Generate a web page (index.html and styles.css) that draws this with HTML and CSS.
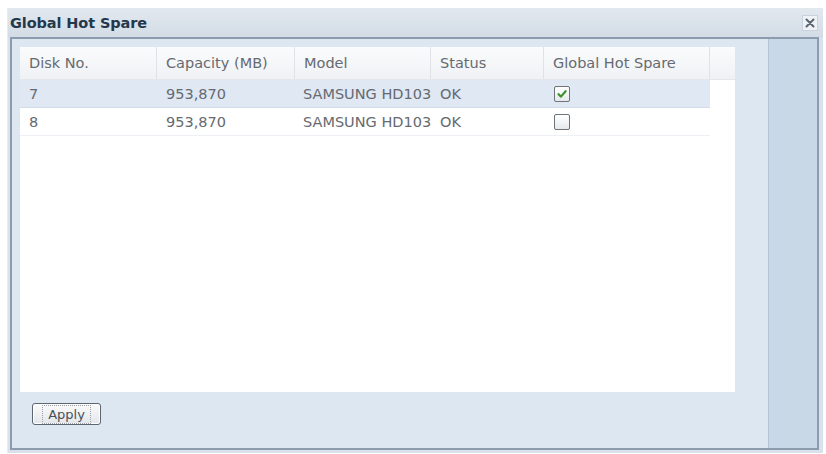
FILE: index.html
```html
<!DOCTYPE html>
<html>
<head>
<meta charset="utf-8">
<link rel="stylesheet" href="styles.css">
</head>
<body>
<div class="dialog">
  <div class="titlebar">
    <span class="title">Global Hot Spare</span>
    <span class="close">
      <svg width="10" height="10" viewBox="0 0 10 10"><path d="M1.5 1.5 L8.5 8.5 M8.5 1.5 L1.5 8.5" stroke="#5a6470" stroke-width="2" stroke-linecap="round"/></svg>
    </span>
  </div>
  <div class="panel">
    <div class="main">
      <div class="grid">
        <div class="head">
          <div class="hc c1">Disk No.</div>
          <div class="hc c2">Capacity (MB)</div>
          <div class="hc c3">Model</div>
          <div class="hc c4">Status</div>
          <div class="hc c5">Global Hot Spare</div>
          <div class="hc c6"></div>
        </div>
        <div class="row sel">
          <div class="cell c1">7</div>
          <div class="cell c2">953,870</div>
          <div class="cell c3">SAMSUNG HD103</div>
          <div class="cell c4">OK</div>
          <div class="cell c5"><span class="cb checked"><svg width="12" height="12" viewBox="0 0 12 12"><path d="M2.5 6.2 L5 8.6 L9.6 3.2" fill="none" stroke="#3f8f2f" stroke-width="2.2" stroke-linecap="round" stroke-linejoin="round"/></svg></span></div>
        </div>
        <div class="row">
          <div class="cell c1">8</div>
          <div class="cell c2">953,870</div>
          <div class="cell c3">SAMSUNG HD103</div>
          <div class="cell c4">OK</div>
          <div class="cell c5"><span class="cb"></span></div>
        </div>
      </div>
      <div class="footer">
        <button class="btn"><span class="btn-label">Apply</span></button>
      </div>
    </div>
    <div class="side"></div>
  </div>
</div>
</body>
</html>
```

FILE: styles.css
```css
html, body {
  margin: 0;
  padding: 0;
  background: #ffffff;
}
body {
  font-family: "DejaVu Sans", Verdana, sans-serif;
}
.dialog {
  margin: 8px 0 0 7px;
  width: 816px;
  height: 445px;
  background: #d9e1ea;
  box-sizing: border-box;
  border-left: 1px solid #e6ebf0;
  display: flex;
  flex-direction: column;
}
.titlebar {
  height: 29px;
  flex: none;
  display: flex;
  align-items: center;
  justify-content: space-between;
  background: linear-gradient(#e2e8ee, #d3dce6);
  padding: 0 5px 0 2px;
}
.title {
  font-weight: bold;
  font-size: 14.5px;
  color: #25384b;
  letter-spacing: -0.1px;
}
.close {
  width: 16px;
  height: 16px;
  box-sizing: border-box;
  border: 1px solid #c9d2dc;
  background: #eef2f6;
  display: flex;
  align-items: center;
  justify-content: center;
  margin-top: 1px;
}
.panel {
  margin-left: 2px;
  width: 809px;
  height: 413px;
  box-sizing: border-box;
  border: 2px solid #8c9bad;
  display: flex;
  background: #dce6f1;
}
.main {
  width: 756px;
  flex: none;
  padding: 8px 0 0 8px;
  box-sizing: border-box;
  background: #dde7f2;
}
.side {
  flex: 1;
  border-left: 1px solid #b3c3d4;
  background: #c9d8e7;
}
.grid {
  width: 715px;
  height: 345px;
  background: #ffffff;
  font-size: 14.5px;
  color: #666a70;
}
.head {
  display: flex;
  height: 33px;
  background: linear-gradient(#fafbfc, #eff2f5);
  border-bottom: 1px solid #e3e7ec;
  box-sizing: border-box;
}
.hc {
  box-sizing: border-box;
  padding-left: 9px;
  display: flex;
  align-items: center;
  border-right: 1px solid #dfe3e8;
  white-space: nowrap;
  overflow: hidden;
}
.hc.c6 {
  border-right: none;
}
.c1 { width: 137px; }
.c2 { width: 138px; }
.c3 { width: 136px; }
.c4 { width: 113px; }
.c5 { width: 166px; }
.c6 { width: 25px; }
.row {
  display: flex;
  width: 690px;
  height: 28px;
  box-sizing: border-box;
  border-bottom: 1px solid #edf0f4;
}
.row.sel {
  background: #dfe8f3;
  border-bottom: 1px solid #d3dde9;
}
.cell {
  box-sizing: border-box;
  padding-left: 9px;
  display: flex;
  align-items: center;
  white-space: nowrap;
  overflow: hidden;
}
.cell.c3 {
  padding-left: 8px;
}
.cb {
  width: 16px;
  height: 16px;
  box-sizing: border-box;
  border: 1px solid #6f7479;
  border-radius: 2px;
  background: linear-gradient(#ffffff, #e6e9ec);
  display: flex;
  align-items: center;
  justify-content: center;
  margin-left: 1px;
}
.footer {
  padding: 11px 0 0 12px;
}
.btn {
  width: 69px;
  height: 22px;
  box-sizing: border-box;
  border: 1px solid #5d6670;
  border-radius: 3px;
  background: linear-gradient(#fbfbfb, #e3e6ea);
  box-shadow: inset 0 0 0 1px #ffffff;
  font-family: "DejaVu Sans", Verdana, sans-serif;
  font-size: 13px;
  color: #4a5058;
  padding: 0;
  display: flex;
  align-items: center;
  justify-content: center;
}
.btn-label {
  outline: 1px dotted #9aa0a6;
  outline-offset: 1px;
  padding: 0 4px;
}
```
